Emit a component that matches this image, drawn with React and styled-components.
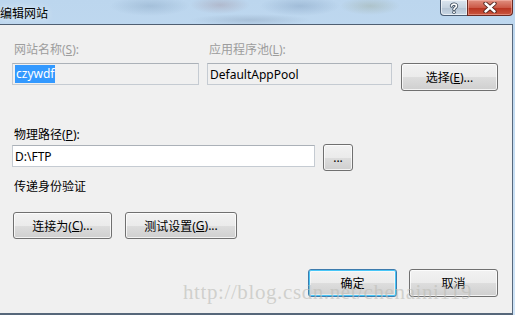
import React from "react";
import styled, { createGlobalStyle, css } from "styled-components";

const GlobalStyle = createGlobalStyle`
  html, body {
    margin: 0;
    padding: 0;
    background: #c9def3;
  }
  body {
    font-family: "Noto Sans", "Noto Sans CJK SC", sans-serif;
    font-size: 12px;
  }
`;

const Window = styled.div`
  position: relative;
  width: 515px;
  height: 315px;
  display: flex;
  flex-direction: column;
  overflow: hidden;
  background:
    radial-gradient(ellipse 40px 10px at 150px 6px, rgba(120, 150, 180, 0.35), transparent),
    radial-gradient(ellipse 30px 9px at 220px 5px, rgba(150, 120, 130, 0.3), transparent),
    radial-gradient(ellipse 40px 10px at 300px 6px, rgba(110, 140, 175, 0.35), transparent),
    radial-gradient(ellipse 30px 9px at 370px 6px, rgba(140, 150, 120, 0.3), transparent),
    radial-gradient(ellipse 60px 6px at 250px 20px, rgba(120, 140, 165, 0.3), transparent),
    linear-gradient(#bcd6ee, #c9e0f5 60%, #cfe4f7);
`;

const TitleBar = styled.div`
  height: 24px;
  display: flex;
  justify-content: space-between;
  align-items: flex-start;
  flex-shrink: 0;
`;

const Title = styled.div`
  font-family: "Noto Sans CJK SC", sans-serif;
  font-size: 12px;
  line-height: 16px;
  padding-top: 5px;
  color: #000;
  text-shadow: 0 0 6px rgba(255, 255, 255, 0.9);
`;

const Controls = styled.div`
  display: flex;
  margin-right: 2px;
`;

const ctrlBase = css`
  height: 16px;
  display: flex;
  align-items: center;
  justify-content: center;
  box-sizing: border-box;
  border: 1px solid #4b5d74;
  border-top: none;
`;

const HelpButton = styled.div`
  ${ctrlBase}
  width: 27px;
  border-right: none;
  border-radius: 0 0 0 4px;
  background: linear-gradient(#dce6f0, #c6d3e0 50%, #b4c3d3 51%, #c9d7e5);
  box-shadow: inset 0 0 0 1px rgba(255, 255, 255, 0.6);
`;

const CloseButton = styled.div`
  ${ctrlBase}
  width: 46px;
  border-radius: 0 0 4px 0;
  border-color: #6b2a22;
  background: linear-gradient(#e09080, #cc5a48 50%, #b8321f 51%, #c9563f);
  box-shadow: inset 0 0 0 1px rgba(255, 200, 190, 0.45);
`;

const Body = styled.div`
  flex: 1;
  margin-right: 2px;
  background: #f0f0f0;
  border-top: 1px solid #4f5f72;
  border-right: 1px solid #58697d;
  border-bottom: 2px solid #56677a;
  padding: 17px 14px 0 12px;
  display: flex;
  flex-direction: column;
  font-family: "Noto Sans", "Noto Sans CJK SC", sans-serif;
  font-size: 12px;
  color: #000;
`;

const TopGrid = styled.div`
  display: grid;
  grid-template-columns: 187px 185px 97px;
  grid-template-rows: 16px auto;
  column-gap: 8px;
  row-gap: 5px;
  align-items: start;
`;

const Label = styled.div`
  line-height: 16px;
  padding-left: 2px;
  white-space: nowrap;
  color: ${(p) => (p.$disabled ? "#9d9d9d" : "#000")};
  margin-top: ${(p) => p.$top || 0}px;
`;

const TextBox = styled.div`
  box-sizing: border-box;
  height: 22px;
  width: ${(p) => p.$width}px;
  border: 1px solid #c5cbd2;
  border-top-color: #abb1b8;
  background: ${(p) => (p.$disabled ? "#f0f0f0" : "#fff")};
  padding: 1px 2px;
  display: flex;
  align-items: center;
  white-space: nowrap;
  margin-top: ${(p) => p.$top || 0}px;
`;

const Selected = styled.span`
  background: #3399ff;
  color: #fff;
  line-height: 18px;
  padding: 0 1px;
`;

const Button = styled.div`
  box-sizing: border-box;
  width: ${(p) => p.$width}px;
  height: ${(p) => p.$height || 27}px;
  border: 1px solid ${(p) => (p.$focused ? "#3d7bad" : "#707070")};
  border-radius: 3px;
  background: linear-gradient(#f2f2f2, #ebebeb 50%, #dddddd 51%, #cfcfcf);
  box-shadow: ${(p) =>
    p.$focused
      ? "inset 0 0 0 1px #48c6f7, inset 0 0 0 2px rgba(255,255,255,0.5)"
      : "inset 0 0 0 1px rgba(255,255,255,0.75)"};
  display: flex;
  align-items: center;
  justify-content: center;
  white-space: nowrap;
  color: #000;
  margin-left: ${(p) => p.$left || 0}px;
`;

const PathRow = styled.div`
  display: flex;
  align-items: flex-start;
  gap: 8px;
  margin-top: 1px;
`;

const ButtonRow = styled.div`
  display: flex;
  gap: ${(p) => p.$gap}px;
  margin-top: ${(p) => p.$top}px;
  justify-content: ${(p) => (p.$end ? "flex-end" : "flex-start")};
  padding-left: ${(p) => p.$left || 0}px;
`;

const Watermark = styled.div`
  position: absolute;
  left: 183px;
  top: 280px;
  font-family: "Liberation Serif", serif;
  font-size: 21px;
  letter-spacing: 0.6px;
  color: rgba(190, 190, 184, 0.65);
  white-space: nowrap;
  pointer-events: none;
`;

const HelpIcon = () => (
  <svg width="12" height="12" viewBox="0 0 12 12">
    <path
      d="M3.5 4 C3.5 1.5 8.5 1.5 8.5 4 C8.5 5.6 6 5.6 6 7.5"
      fill="none"
      stroke="#3d4c5e"
      strokeWidth="3.4"
      strokeLinecap="round"
    />
    <path
      d="M3.5 4 C3.5 1.5 8.5 1.5 8.5 4 C8.5 5.6 6 5.6 6 7.5"
      fill="none"
      stroke="#fff"
      strokeWidth="1.7"
      strokeLinecap="round"
    />
    <circle cx="6" cy="10.2" r="1.7" fill="#3d4c5e" />
    <circle cx="6" cy="10.2" r="1" fill="#fff" />
  </svg>
);

const CloseIcon = () => (
  <svg width="14" height="11" viewBox="0 0 14 11">
    <path d="M2.5 1.5 L11.5 9.5 M11.5 1.5 L2.5 9.5" stroke="#4a1e18" strokeWidth="4.2" strokeLinecap="round" />
    <path d="M2.5 1.5 L11.5 9.5 M11.5 1.5 L2.5 9.5" stroke="#fff" strokeWidth="2.4" strokeLinecap="round" />
  </svg>
);

export default function App() {
  return (
    <>
      <GlobalStyle />
      <Window>
        <TitleBar>
          <Title>编辑网站</Title>
          <Controls>
            <HelpButton>
              <HelpIcon />
            </HelpButton>
            <CloseButton>
              <CloseIcon />
            </CloseButton>
          </Controls>
        </TitleBar>
        <Body>
          <TopGrid>
            <Label $disabled>
              网站名称(<u>S</u>):
            </Label>
            <Label $disabled>
              应用程序池(<u>L</u>):
            </Label>
            <div />
            <TextBox $width={187} $disabled>
              <Selected>czywdf</Selected>
            </TextBox>
            <TextBox $width={185} $disabled>
              DefaultAppPool
            </TextBox>
            <Button $width={97} $height={28} $left={1}>
              选择(<u>E</u>)...
            </Button>
          </TopGrid>

          <Label $top={36}>
            物理路径(<u>P</u>):
          </Label>
          <PathRow>
            <TextBox $width={303} $top={1}>
              D:\FTP
            </TextBox>
            <Button $width={30}>...</Button>
          </PathRow>

          <Label $top={8}>传递身份验证</Label>

          <ButtonRow $gap={13} $top={17} $left={1}>
            <Button $width={99}>
              连接为(<u>C</u>)...
            </Button>
            <Button $width={112}>
              测试设置(<u>G</u>)...
            </Button>
          </ButtonRow>

          <ButtonRow $gap={12} $top={30} $end>
            <Button $width={89} $height={28} $focused>
              确定
            </Button>
            <Button $width={89} $height={28}>
              取消
            </Button>
          </ButtonRow>
        </Body>
        <Watermark>http://blog.csdn.net/chenaini119</Watermark>
      </Window>
    </>
  );
}
